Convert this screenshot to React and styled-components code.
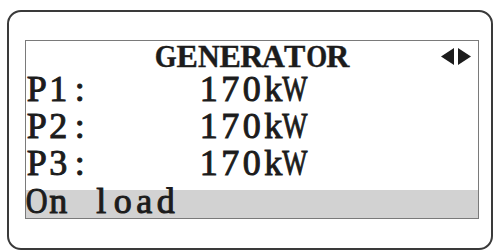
import React from "react";
import styled, { createGlobalStyle } from "styled-components";

const GlobalStyle = createGlobalStyle`
  html, body {
    margin: 0;
    padding: 0;
    background: #ffffff;
  }
`;

const COLS = 21;
const CELL = 21.5;
// glyphs wider than one LCD cell get squeezed into it
const SQUEEZE = { W: 0.74, M: 0.74, m: 0.78, O: 0.84, G: 0.88, N: 0.94 };

const Frame = styled.div`
  box-sizing: border-box;
  width: 486px;
  height: 240px;
  margin: 10px 0 0 7px;
  border: 2px solid #3a3a3a;
  border-radius: 14px;
  padding: 28px 0 0 16px;
`;

const Screen = styled.div`
  box-sizing: border-box;
  width: 454px;
  height: 179px;
  border: 1px solid #7a7a7a;
  display: flex;
  flex-direction: column;
  color: #1c1c1c;
`;

// one row of the character LCD: a fixed grid of character cells
const Line = styled.div`
  height: ${(p) => p.$h}px;
  margin-top: ${(p) => p.$gap || 0}px;
  line-height: ${(p) => p.$lh}px;
  display: grid;
  grid-template-columns: repeat(${COLS}, ${CELL}px);
  align-items: start;
  background: ${(p) => (p.$highlight ? "#d2d2d2" : "transparent")};
`;

const Cell = styled.span`
  display: flex;
  justify-content: center;
  white-space: pre;
  font-family: "Liberation Serif", "Times New Roman", serif;
  font-size: ${(p) => (p.$bold ? 32 : 36)}px;
  font-weight: ${(p) => (p.$bold ? "bold" : "normal")};
  -webkit-text-stroke: ${(p) => (p.$bold ? 0.4 : 1)}px #1c1c1c;
  transform: scaleX(${(p) => p.$sx});
`;

const Arrows = styled.svg`
  grid-column: 20 / span 2;
  justify-self: center;
  align-self: center;
  width: 30px;
  height: 17px;
`;

const Text = ({ children, bold }) =>
  children.split("").map((ch, i) => (
    <Cell key={i} $bold={bold} $sx={SQUEEZE[ch] || 1}>
      {ch}
    </Cell>
  ));

const rows = [
  { label: "P1:", value: "170kW" },
  { label: "P2:", value: "170kW" },
  { label: "P3:", value: "170kW" },
];

export default function App() {
  return (
    <>
      <GlobalStyle />
      <Frame>
        <Screen>
          <Line $h={31} $lh={31}>
            <Text bold>{"      GENERATOR    "}</Text>
            <Arrows viewBox="0 0 30 17">
              <polygon points="0,8.5 13,0 13,17" fill="#1c1c1c" />
              <polygon points="30,8.5 17,0 17,17" fill="#1c1c1c" />
            </Arrows>
          </Line>
          {rows.map((r) => (
            <Line key={r.label} $h={37} $lh={35}>
              <Text>{r.label + "     " + r.value}</Text>
            </Line>
          ))}
          <Line $h={28} $lh={22} $gap={7} $highlight>
            <Text>On load</Text>
          </Line>
        </Screen>
      </Frame>
    </>
  );
}
